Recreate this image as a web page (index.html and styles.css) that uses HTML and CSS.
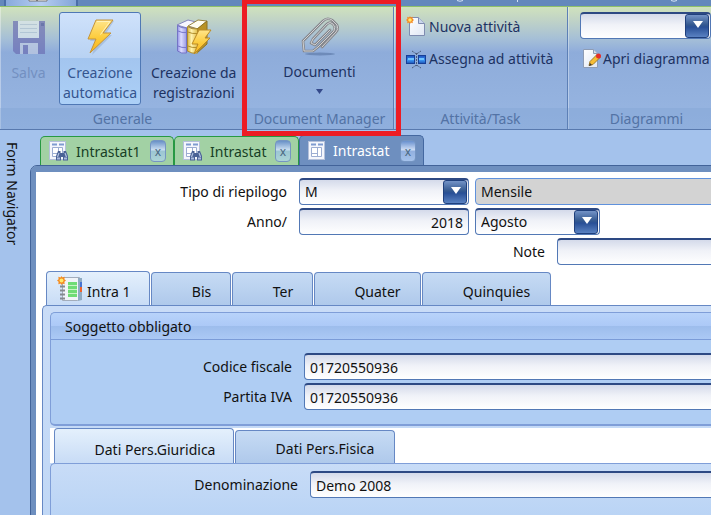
FILE: index.html
```html
<!DOCTYPE html>
<html lang="it">
<head>
<meta charset="utf-8">
<title>Intrastat</title>
<link rel="stylesheet" href="styles.css">
</head>
<body>
<svg class="defs" aria-hidden="true">
  <defs>
    <linearGradient id="bolt" x1="0" y1="0" x2="0" y2="1"><stop offset="0" stop-color="#ffe58a"/><stop offset=".55" stop-color="#fccb3a"/><stop offset="1" stop-color="#f8b21c"/></linearGradient>
    <linearGradient id="violet" x1="0" y1="0" x2="1" y2="0"><stop offset="0" stop-color="#9292e6"/><stop offset=".4" stop-color="#dcdcff"/><stop offset="1" stop-color="#9a9ae4"/></linearGradient>
    <linearGradient id="gold" x1="0" y1="0" x2="1" y2="0"><stop offset="0" stop-color="#d8b440"/><stop offset=".4" stop-color="#fff2ae"/><stop offset="1" stop-color="#e0bd48"/></linearGradient>
    <linearGradient id="blue" x1="0" y1="0" x2="0" y2="1"><stop offset="0" stop-color="#1d50c0"/><stop offset=".6" stop-color="#3a94f0"/><stop offset="1" stop-color="#1c50b4"/></linearGradient>
    <linearGradient id="paper" x1="0" y1="0" x2="1" y2="1"><stop offset="0" stop-color="#fff"/><stop offset="1" stop-color="#dfe7f4"/></linearGradient>
  </defs>
  <symbol id="sun" viewBox="0 0 10 10"><path fill="#f58a1f" d="M5 0l1 1.800L8.500.8 8.200 3.500 10 5 8.200 6.500l.3 2.700L6 8.200 5 10 4 8.200 1.500 9.200l.3-2.700L0 5l1.800-1.500L1.500.8 4 1.800z"/><circle cx="5" cy="5" r="2.200" fill="#ffe86a"/></symbol>
  <symbol id="form" viewBox="0 0 18 20"><rect x=".5" y=".5" width="16" height="18" fill="#f4f6fc" stroke="#b4c0da"/><path d="M3 3.500h5M10 3.500h5" stroke="#7f9bd0" stroke-width="2"/><path d="M3.500 6.500h10v9h-10zM9.500 6.500v9M3.500 12.500h6" fill="#fff" stroke="#9cadd2"/></symbol>
  <symbol id="binoculars" viewBox="0 0 12 11"><path fill="#4a6296" d="M2 1h2.500v2h3V1H10l2 5v4.500H7V7H5v3.500H0V6z"/><path d="M3 3L1.500 7M9 3l1.500 4" stroke="#b3c2e2" stroke-width="1.200"/><path d="M1 8.500h3M8 8.500h3" stroke="#a9badd" stroke-width="2"/></symbol>
</svg>
<div class="app">
  <header class="titlebar">
    <span class="window-tab"><svg width="20" height="6" viewBox="0 0 20 6" aria-hidden="true"><path d="M1 0v1h18V0" fill="#fff" stroke="#777"/><path d="M9 0v1" stroke="#777" stroke-width="2"/></svg></span>
    <svg class="marks" width="220" height="2" viewBox="0 0 220 2" aria-hidden="true"><path d="M0 .500q3 1.500 6 0M214 .500q3 1.500 6 0M60.500 0v2" fill="none" stroke="#d5e2f5"/></svg>
  </header>
  <div class="ribbon">
    <section class="group general">
      <div class="tools">
        <button class="big save" disabled>
          <svg width="34" height="36" viewBox="0 0 34 36" aria-hidden="true"><path d="M1 2h32v33H4l-3-3z" fill="#6c6fb4"/><path d="M6 2h21v17H6z" fill="#dce7ef"/><path d="M8 5.500h17M8 9.500h17M8 13.500h17" stroke="#b3c5d8"/><path d="M8 24h18v11H8z" fill="#c0cbe2"/><path d="M11 26h5v9h-5z" fill="#6c6fb4"/><path d="M29 4h3v3h-3z" fill="#4a529d"/></svg>
          <span>Salva</span>
        </button>
        <button class="big selected">
          <svg width="36" height="36" viewBox="0 0 36 36" aria-hidden="true"><path d="M15 2h17L23 16h7L10 36l5-14H8z" fill="#718baf" opacity=".3"/><path d="M14 1h17L21 14h8L8 34l6-14H6z" fill="url(#bolt)" stroke="#c5943a"/><path d="M15 2.500h13L18.500 15.500" fill="none" stroke="#fff3ba"/></svg>
          <span>Creazione<br>automatica</span>
        </button>
        <button class="big books">
          <svg width="36" height="36" viewBox="0 0 36 36" aria-hidden="true"><path d="M1 6L12 1l8 2-9 6z" fill="#f7f7ff" stroke="#8686c0"/><path d="M10 9l9-6v24l-9 7z" fill="#8080cc"/><path d="M1.500 6.500q4 3 9 2.500v25q-5 1-9-2z" fill="url(#violet)" stroke="#7474c6"/><path d="M2 12q4 2 8 1.500M2 27q4 2 8 1.500" fill="none" stroke="#7878cb"/><path d="M12 7L22 1l9 1-9 8z" fill="#fffdf0" stroke="#9a8640"/><path d="M21 10l10-8v23l-10 9z" fill="#b99224" stroke="#8a7226"/><path d="M11.500 7.500q4 3 10 2.500v24q-6 1-10-2z" fill="url(#gold)" stroke="#b08e2c"/><path d="M12 13q4 2 9 1.500M12 27q4 2 9 1.500" fill="none" stroke="#b08e2c"/><path d="M23 11h12l-6 8h5L18 35l4-10h-6z" fill="url(#bolt)" stroke="#bd8b24"/></svg>
          <span>Creazione da<br>registrazioni</span>
        </button>
      </div>
      <h2>Generale</h2>
    </section>
    <section class="group documents">
      <div class="tools">
        <button class="big docs">
          <svg width="40" height="40" viewBox="0 0 40 40" aria-hidden="true"><ellipse cx="20" cy="38" rx="15" ry="1.500" fill="#5874a4" opacity=".6"/><g fill="none" stroke-linejoin="round" stroke-linecap="round"><path d="M13 23L27 8q3-3 6 0t1 7L18 31l-5 4H4l-1-10L23 5q4-4 9-1l5 5q2 4-1 7L22 31M13 23l-2 4 4 2 3-3 12-12" stroke="#85868b" stroke-width="2.600"/><path d="M13 23L27 8q3-3 6 0t1 7L18 31l-5 4H4l-1-10L23 5q4-4 9-1l5 5q2 4-1 7L22 31M13 23l-2 4 4 2 3-3 12-12" stroke="#cfd0d2" stroke-width="1"/></g></svg>
          <span>Documenti</span><i class="caret"></i>
        </button>
      </div>
      <h2>Document Manager</h2>
    </section>
    <section class="group tasks">
      <div class="tools list">
        <button class="small"><svg width="20" height="21" viewBox="0 0 20 21" aria-hidden="true"><path d="M3.500 1.500h9l6 6v12h-15z" fill="url(#paper)" stroke="#7f8cb0"/><path d="M12.500 1.500v6h6" fill="#c9d5eb" stroke="#7f8cb0"/><use href="#sun" width="8" height="8"/></svg><span>Nuova attività</span></button>
        <button class="small"><svg width="20" height="20" viewBox="0 0 20 20" aria-hidden="true"><rect x=".5" y="6.500" width="8" height="8" fill="url(#blue)" stroke="#173f96"/><rect x="12.500" y="6.500" width="7" height="8" fill="url(#blue)" stroke="#173f96"/><path d="M2 10h6M13 10h5" stroke="#6fc4ff" stroke-width="2"/><path d="M10.500 4v13M6 2l4.500 3L15 2M6 19l4.500-3 4.500 3" fill="none" stroke="#4c5c7b" stroke-dasharray="2 1"/></svg><span>Assegna ad attività</span></button>
      </div>
      <h2>Attività/Task</h2>
    </section>
    <section class="group diagrams">
      <div class="tools list">
        <span class="combo"><select aria-label="Diagramma"><option></option></select></span>
        <button class="small"><svg width="20" height="20" viewBox="0 0 20 20" aria-hidden="true"><path d="M1.500.5h10l4 4v14h-14z" fill="url(#paper)" stroke="#8e9cb4"/><path d="M11.500.5v4h4" fill="#d5ddeb" stroke="#8e9cb4"/><path d="M7 16.500l1-4 7-7 3 3-7 7z" fill="#f6bd35" stroke="#a07c2c"/><path d="M7 17l1-3 2 2z" fill="#44392c"/><circle cx="16.500" cy="7" r="2.500" fill="#e52d29"/></svg><span>Apri diagramma</span></button>
      </div>
      <h2>Diagrammi</h2>
    </section>
  </div>
  <div class="workspace">
    <aside>Form Navigator</aside>
    <main>
      <nav class="doc-tabs">
        <div class="doc-tab"><svg width="20" height="20" aria-hidden="true"><use href="#form" width="18" height="20"/><use href="#binoculars" x="7" y="9" width="12" height="11"/></svg><a href="#">Intrastat1</a><button class="close" aria-label="Chiudi Intrastat1">x</button></div>
        <div class="doc-tab second"><svg width="20" height="20" aria-hidden="true"><use href="#form" width="18" height="20"/><use href="#binoculars" x="7" y="9" width="12" height="11"/></svg><a href="#">Intrastat</a><button class="close" aria-label="Chiudi Intrastat">x</button></div>
        <div class="doc-tab active"><svg width="18" height="20" aria-hidden="true"><use href="#form" width="18" height="20"/></svg><a href="#">Intrastat</a><button class="close" aria-label="Chiudi scheda attiva">x</button></div>
      </nav>
      <div class="page">
        <div class="filters">
          <div class="row"><label for="tipo">Tipo di riepilogo</label><span class="combo wide"><select id="tipo"><option>M</option></select></span><input class="open readonly" aria-label="Descrizione" value="Mensile" readonly></div>
          <div class="row"><label for="anno">Anno/</label><input class="wide number" id="anno" value="2018"><span class="combo month"><select aria-label="Mese"><option>Agosto</option></select></span></div>
          <div class="row note"><label for="note">Note</label><input class="open" id="note"></div>
        </div>
        <nav class="tabs">
          <button class="active"><svg width="26" height="26" viewBox="0 0 26 26" aria-hidden="true"><path d="M5.500 1.500h17v21l-2 2h-15z" fill="#f0f4f8" stroke="#a3adbb"/><path d="M21 2h4v22l-4 1z" fill="#8fabc2"/><path d="M24 6v5" stroke="#4873d0" stroke-width="2"/><path d="M24 11v5" stroke="#ef642b" stroke-width="2"/><path d="M11 6h9v15h-9z" fill="#6fdc75"/><path d="M11 9.500h9M11 13.500h9M11 17.500h9" stroke="#c6f5c3"/><path d="M3 10.500h5M3 14.500h5M3 18.500h5M3 22.500h5" stroke="#84898f" stroke-width="2"/><use href="#sun" width="9" height="9"/></svg><span>Intra 1</span></button>
          <button class="bis">Bis</button><button class="ter">Ter</button><button class="quater">Quater</button><button class="quinquies">Quinquies</button>
        </nav>
        <div class="panel">
          <section class="subject">
            <h3>Soggetto obbligato</h3>
            <div class="fields">
              <div class="row"><label for="cf">Codice fiscale</label><input class="open" id="cf" value="01720550936"></div>
              <div class="row"><label for="iva">Partita IVA</label><input class="open" id="iva" value="01720550936"></div>
            </div>
          </section>
          <nav class="tabs sub"><button class="active">Dati Pers.Giuridica</button><button class="fisica">Dati Pers.Fisica</button></nav>
          <section class="person"><div class="row"><label for="den">Denominazione</label><input class="open" id="den" value="Demo 2008"></div></section>
        </div>
      </div>
    </main>
  </div>
  <div class="highlight"></div>
</div>
</body>
</html>
```
FILE: styles.css
```css
* { box-sizing: border-box; }
body { margin: 0; padding: 0 12px 11px 0; background: #fff; font: 14px/20px "Noto Sans", "Open Sans", sans-serif; color: #111; }
button, input, select { font: inherit; color: inherit; margin: 0; }
button { border: 0; background: none; padding: 0; }
a { color: inherit; text-decoration: none; }
h2, h3 { margin: 0; font: inherit; }
svg { display: block; flex: none; }
.defs { position: absolute; width: 0; height: 0; }
.app { position: relative; min-height: calc(100vh - 11px); overflow: hidden; display: flex; flex-direction: column; background: #a4c2ec; }

.titlebar { display: flex; height: 6px; flex: none; overflow: hidden; background: #6488bc; padding-left: 4px; }
.window-tab { display: flex; flex: none; width: 74px; height: 6px; padding-left: 22px; border: solid #4a6ea8; border-width: 0 2px; background: linear-gradient(90deg, #88a9dc, #b5cdf1, #83a5d8); }
.marks { margin-left: 379px; }

.ribbon { display: flex; flex: none; height: 124px; border-top: 1px solid #8fc06a; border-bottom: 1px solid #5879ae; background: linear-gradient(#d0e2bd, #bfd2c7 14px, #a5bfd7 32px, #91aedb 44px, #8eacda 45px, #98b6e2); color: #1d3262; }
.group { display: flex; flex: none; flex-direction: column; border-right: 1px solid #5d80b6; box-shadow: inset 1px 0 rgba(255,255,255,.35); }
.general { width: 246px; }
.documents { width: 148px; }
.tasks { width: 174px; }
.diagrams { flex: 1; border: 0; min-width: 143px; }
.tools { display: flex; flex: 1; padding-top: 5px; }
.group h2 { height: 21px; line-height: 21px; text-align: center; color: #5373a5; background: rgba(123,158,210,.3); }
.big { display: flex; flex-direction: column; align-items: center; height: 93px; padding-top: 6px; border: 1px solid transparent; white-space: nowrap; }
.big span { padding-top: 8px; }
.save { width: 59px; padding-right: 2px; }
.save svg { opacity: .7; }
.save span { color: #7390c1; }
.selected { width: 82px; margin-right: 9px; border: 1px solid #4f78b5; border-radius: 3px; background: linear-gradient(#cfe2fb, #b8d2f3 50%, #a3c5ef 50%, #acd0f7); color: #35558f; }
.documents .tools { justify-content: center; }
.docs { padding-top: 3px; }
.docs span { padding-top: 6px; }
.caret { width: 7px; height: 5px; margin-top: 7px; background: #34498a; clip-path: polygon(0 0, 100% 0, 50% 100%); }
.list { flex-direction: column; gap: 11px; padding: 9px 0 0 12px; }
.small { display: flex; align-items: center; gap: 3px; height: 21px; white-space: nowrap; }
.diagrams .list { gap: 9px; padding: 5px 0 0 12px; }
.diagrams .small { padding-left: 2px; gap: 1px; }
.diagrams h2 { padding-left: 14px; }

.workspace { display: flex; flex: 1; padding-top: 5px; }
aside { flex: none; width: 30px; padding: 7px 7px 0 0; writing-mode: vertical-rl; line-height: 22px; }
main { flex: 1; min-width: 0; display: flex; flex-direction: column; }
.doc-tabs { display: flex; flex: none; align-items: flex-end; height: 30px; padding-left: 10px; color: #173f25; }
.doc-tab { display: flex; align-items: center; width: 134px; height: 29px; padding: 0 7px 0 8px; border: 1px solid #279943; border-bottom: 0; border-radius: 5px 5px 0 0; background: #a2d1a4; }
.doc-tab a { flex: 1; padding: 1px 0 0 7px; }
.second { width: 125px; }
.doc-tab.active { width: 125px; height: 30px; border-color: #4468a0; background: #6e8fbf; color: #fff; }
.close { width: 16px; height: 22px; line-height: 22px; border: 1px solid #7595c2; border-radius: 4px; background: linear-gradient(#6991c7, #cce0f2 45%, #9bc5d3 50%, #add5d6); color: #4a6780; font-size: 12px; }
.active .close { background: linear-gradient(#6991cf, #cfdef5 45%, #91afdf 50%, #a5c2eb); }

.page { flex: 1; display: flex; flex-direction: column; margin: 1px 0 0 1px; border: solid #6e8fbf; border-width: 6px 0 0 5px; outline: 1px solid #426399; border-radius: 6px 0 0; background: #fff; overflow: hidden; }
.row { display: flex; gap: 6px; height: 27px; }
.row label { flex: none; line-height: 28px; text-align: right; padding-right: 6px; }
.filters { display: flex; flex-direction: column; gap: 3px; padding-top: 6px; height: 99px; }
.filters label { width: 257px; }
.filters .note label { width: 515px; }
input, select { display: block; min-width: 0; height: 27px; padding: 0 5px; border: 1px solid #5278b5; border-top: 2px solid #2d4983; border-radius: 4px; outline: 0; background: linear-gradient(#d4daea, #f0f2f8 45%, #fff); }
select { appearance: none; width: 100%; }
.combo { position: relative; display: block; flex: none; }
.combo::before { content: ""; position: absolute; right: 2px; top: 2px; width: 22px; height: 22px; border: 1px solid #20407c; border-radius: 3px; background: linear-gradient(#7393c7, #33588f 45%, #284f96 55%, #5a82c2); pointer-events: none; }
.combo::after { content: ""; position: absolute; right: 8px; top: 9px; width: 10px; height: 7px; background: #fff; clip-path: polygon(0 0, 100% 0, 50% 100%); pointer-events: none; }
.wide { width: 170px; }
.month { width: 125px; }
.number { text-align: right; }
.open { flex: 1; margin-right: -6px; }
.readonly { background: #d3d3d3; border-color: #5f91dc; border-top-width: 1px; }

.tabs { display: flex; flex: none; align-items: flex-end; gap: 1px; padding-left: 10px; height: 34px; }
.tabs button { height: 33px; padding-top: 6px; border: 1px solid #6688c4; border-bottom: 0; border-radius: 4px 4px 0 0; background: linear-gradient(#c6dbf4, #afc9eb); }
.tabs .active { display: flex; align-items: center; gap: 4px; width: 104px; height: 34px; padding: 0 0 0 10px; background: linear-gradient(#e4f0fc, #c8dcf6); }
.tabs .active span { padding-top: 6px; }
.tabs .bis { width: 80px; padding-left: 21px; }
.tabs .ter { width: 81px; padding-left: 21px; }
.tabs .quater { width: 107px; padding-left: 20px; }
.tabs .quinquies { width: 129px; padding-left: 20px; }
.panel { flex: 1; display: flex; flex-direction: column; margin-left: 6px; padding: 6px 0 0 7px; border: solid #6688c4; border-width: 1px 0 0 1px; border-radius: 5px 0 0; background: linear-gradient(#c9dcf7, #c1d8f6); }
.subject { border: solid #7f9ed8; border-width: 1px 0 2px 1px; border-radius: 5px 0 0 5px; background: #afcdf3; }
.subject h3 { height: 27px; padding-left: 14px; line-height: 28px; border-bottom: 1px solid #7b9cd8; border-radius: 5px 0 0; background: linear-gradient(#b8d3fa, #acc9f7 50%, #9dbdec 51%, #abc9f5); }
.fields { display: flex; flex-direction: column; gap: 3px; padding: 13px 0 14px; }
.fields label { width: 247px; }
.tabs.sub { padding-left: 4px; margin-top: 2px; height: 35px; background: #fff; }
.sub button { padding-top: 4px; }
.tabs.sub .active { width: 180px; height: 35px; padding: 8px 0 0 22px; justify-content: center; }
.sub .fisica { width: 160px; padding-left: 20px; }
.person { flex: 1; padding: 7px 0 16px; border: solid #7f9ed8; border-width: 1px 0 0 1px; border-radius: 5px 0 0; background: linear-gradient(#c8dcf7, #bad4f5); }
.person label { width: 253px; }
.highlight { position: absolute; left: 242px; top: -1px; width: 159px; height: 137px; border: 5px solid #ed1c24; pointer-events: none; }
```
